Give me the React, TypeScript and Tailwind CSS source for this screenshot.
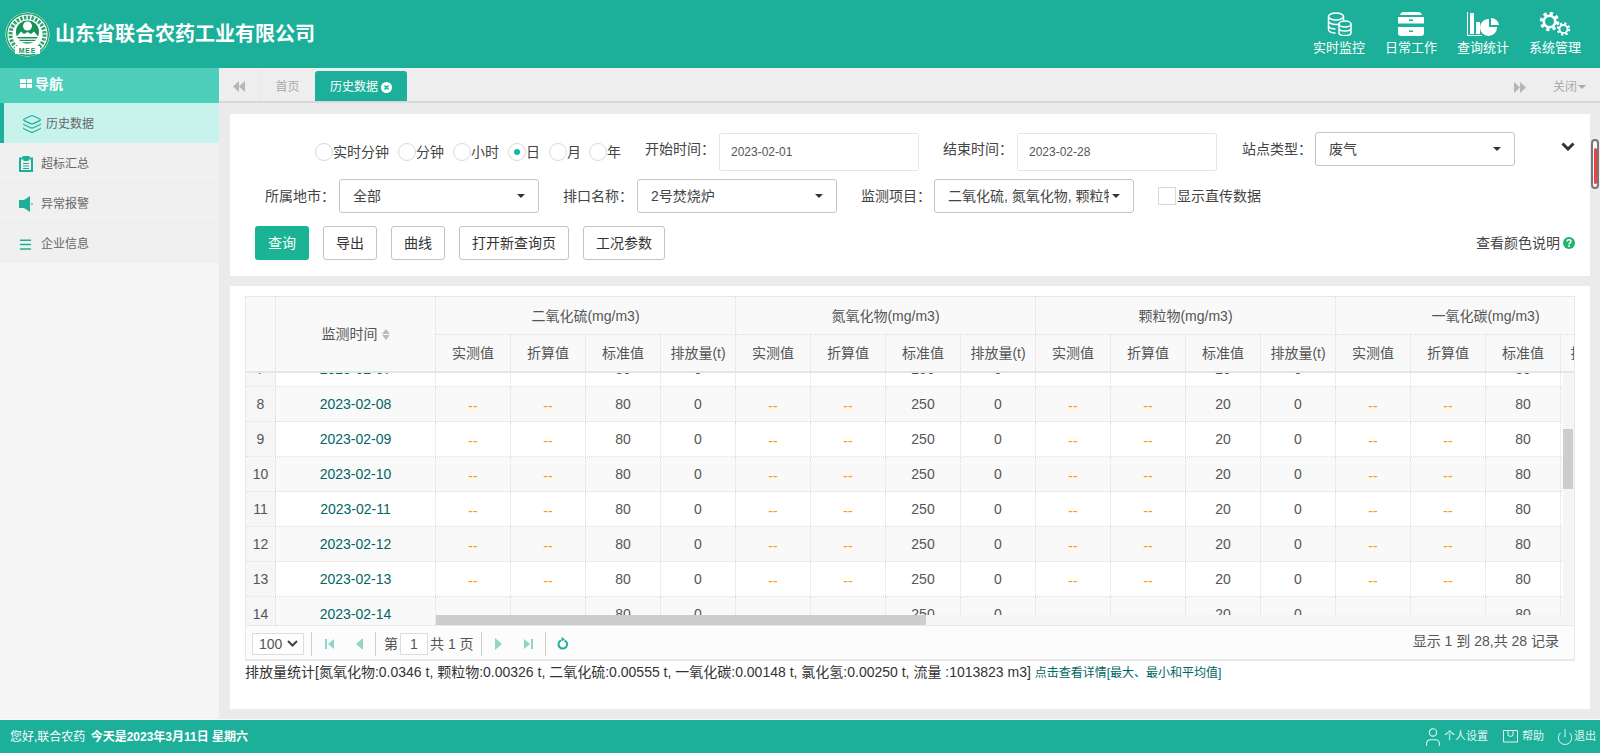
import { Layers, Menu, Power, User } from 'lucide-react';

const font = "font-['Liberation_Sans','Noto_Sans_CJK_SC',sans-serif]";

const radios = [
  { label: '实时分钟', cls: 'ml-[85px]' },
  { label: '分钟', cls: 'ml-[9px]' },
  { label: '小时', cls: 'ml-[9px]' },
  { label: '日', cls: 'ml-[9px]', checked: true },
  { label: '月', cls: 'ml-[9px]' },
  { label: '年', cls: 'ml-[8px]' },
];

const rows = [
  { no: 7, date: '2023-02-07' },
  { no: 8, date: '2023-02-08' },
  { no: 9, date: '2023-02-09' },
  { no: 10, date: '2023-02-10' },
  { no: 11, date: '2023-02-11' },
  { no: 12, date: '2023-02-12' },
  { no: 13, date: '2023-02-13' },
  { no: 14, date: '2023-02-14' },
];

const groups = [
  { title: '二氧化硫(mg/m3)', std: '80' },
  { title: '氮氧化物(mg/m3)', std: '250' },
  { title: '颗粒物(mg/m3)', std: '20' },
  { title: '一氧化碳(mg/m3)', std: '80' },
];

function Logo() {
  return (
    <svg width="45" height="45" viewBox="0 0 45 45" className="shrink-0">
      <circle cx="22.5" cy="22.5" r="22" fill="#fff" />
      <circle cx="22.5" cy="22.5" r="20.8" fill="none" stroke="#1f9e62" strokeWidth="1.4" />
      <circle cx="22.5" cy="22.5" r="17" fill="none" stroke="#2aa56d" strokeWidth="4" strokeDasharray="2.4 1.4" />
      <circle cx="22.5" cy="20" r="12.500" fill="#fff" />
      <circle cx="22.5" cy="20" r="11.500" fill="#14925a" />
      <circle cx="22.5" cy="14" r="4.500" fill="#fff" />
      <path d="M11.500 25 L16 19.500 L19 22 L22.5 20 L26 22 L29 19.500 L33.500 25 Z" fill="#fff" />
      <path d="M12 26.500h21v1.300H12zM14.500 29h16v1.200H14.500z" fill="#fff" />
      <rect x="10" y="34" width="25" height="8" fill="#fff" />
      <text x="22.5" y="40.500" textAnchor="middle" fontSize="7" fontWeight="700" fill="#14925a" letterSpacing="0.8">MEE</text>
    </svg>
  );
}

function DbIcon() {
  return (
    <svg width="25" height="24" viewBox="0 0 25 24" fill="none" stroke="#fff" strokeWidth="1.5">
      <ellipse cx="9" cy="4.5" rx="7.5" ry="3.5" />
      <path d="M1.5 4.5v13c0 2 3 3.5 7 3.5M1.5 9c0 2 3.5 3.5 7.5 3.5 1 0 2-.1 3-.3M1.5 13.500c0 2 3 3.500 7 3.500M16.500 4.500v4" />
      <ellipse cx="18" cy="12" rx="6" ry="3" />
      <path d="M12 12v9c0 1.500 2.700 2.500 6 2.500s6-1 6-2.500v-9M12 16.500c0 1.500 2.700 2.500 6 2.500s6-1 6-2.500" />
    </svg>
  );
}

function DrawerIcon() {
  return (
    <svg width="26" height="24" viewBox="0 0 26 24" fill="#fff">
      <path d="M5 0h16a4 4 0 0 1 3 3H2a4 4 0 0 1 3-3z" />
      <path d="M0 5h26v6.500H0z" />
      <path d="M0 15h26v6a3 3 0 0 1-3 3H3a3 3 0 0 1-3-3z" />
      <rect x="11" y="7.500" width="4" height="1.500" fill="#1cb09a" />
      <rect x="11" y="18.500" width="4" height="1.500" fill="#1cb09a" />
    </svg>
  );
}

function ChartIcon() {
  return (
    <svg width="33" height="24" viewBox="0 0 33 24" fill="#fff">
      <path d="M0 0h1v23h14v1H0z" />
      <rect x="3" y="1" width="4" height="21" />
      <rect x="9" y="10" width="4" height="12" />
      <path d="M23 6v8h8a8.500 8.500 0 1 1-8-8z" transform="translate(-1 1)" />
      <path d="M24 6a8 8 0 0 1 8 7h-8z" />
    </svg>
  );
}

function GearsIcon() {
  return (
    <svg width="32" height="24" viewBox="0 0 32 24" fill="none" stroke="#fff">
      <circle cx="10.500" cy="9.500" r="8" strokeWidth="3.500" strokeDasharray="3.200 3.080" />
      <circle cx="10.500" cy="9.500" r="5.800" strokeWidth="2.600" />
      <circle cx="24.500" cy="17" r="5.500" strokeWidth="2.500" strokeDasharray="2.200 2.120" />
      <circle cx="24.500" cy="17" r="4" strokeWidth="1.800" />
    </svg>
  );
}

function TopMenu({ label, children }: { label: string; children: React.ReactNode }) {
  return (
    <div className="flex w-[52px] flex-col items-center">
      <div className="flex h-[24px] items-center justify-center">{children}</div>
      <div className="mt-[3px] whitespace-nowrap text-[13px] leading-[18px] text-white">{label}</div>
    </div>
  );
}

function DoubleArrow({ left }: { left?: boolean }) {
  return (
    <svg width="12" height="11" viewBox="0 0 12 11" fill="#b5b5b5">
      {left ? <path d="M6 0v11L0 5.500zM12 0v11L6 5.500z" /> : <path d="M0 0v11l6-5.500zM6 0v11l6-5.500z" />}
    </svg>
  );
}

function Caret() {
  return <span className="h-0 w-0 shrink-0 border-x-[4px] border-t-[4px] border-x-transparent border-t-[#333]" />;
}

function SelectBox({ text, clip }: { text: string; clip?: boolean }) {
  return (
    <div className="flex h-[34px] w-[200px] shrink-0 items-center justify-between rounded-[3px] border border-[#c4c4c4] bg-white pl-[13px] pr-[13px] text-sm text-[#444]">
      <span className={clip ? 'w-[161px] overflow-hidden whitespace-nowrap' : 'whitespace-nowrap'}>{text}</span>
      <Caret />
    </div>
  );
}

function Btn({ text, primary, cls }: { text: string; primary?: boolean; cls: string }) {
  return (
    <button
      className={
        primary
          ? `h-[34px] rounded-[3px] bg-[#1ab394] text-sm text-white ${cls}`
          : `h-[34px] rounded-[3px] border border-[#c4c4c4] bg-white text-sm text-[#333] ${cls}`
      }
    >
      {text}
    </button>
  );
}

function PagerIcon({ d }: { d: string }) {
  return (
    <svg width="10" height="12" viewBox="0 0 10 12" fill="#8fd6c9">
      <path d={d} />
    </svg>
  );
}

function BodyCell({ children, orange }: { children?: React.ReactNode; orange?: boolean }) {
  return (
    <div
      className={
        orange
          ? 'flex w-[75px] shrink-0 items-center justify-center border-r border-dotted border-[#ddd] pt-[3px] text-[#f90]'
          : 'flex w-[75px] shrink-0 items-center justify-center border-r border-dotted border-[#ddd]'
      }
    >
      {children}
    </div>
  );
}

export default function App() {
  return (
    <div className={`flex h-[753px] w-[1600px] flex-col overflow-hidden bg-[#ebebed] ${font}`}>
      {/* top bar */}
      <header className="flex h-[68px] shrink-0 items-center justify-between bg-[#1cb09a] pl-[5px] pr-[19px]">
        <div className="flex items-center gap-[5px]">
          <Logo />
          <h1 className="text-[20px] font-bold text-white">山东省联合农药工业有限公司</h1>
        </div>
        <div className="flex gap-[20px] pt-[1px]">
          <TopMenu label="实时监控"><DbIcon /></TopMenu>
          <TopMenu label="日常工作"><DrawerIcon /></TopMenu>
          <TopMenu label="查询统计"><ChartIcon /></TopMenu>
          <TopMenu label="系统管理"><GearsIcon /></TopMenu>
        </div>
      </header>

      <div className="flex h-[651px] shrink-0">
        {/* side nav */}
        <aside className="w-[219px] shrink-0 bg-[#f5f5f5]">
          <div className="flex h-[35px] items-center gap-[3px] bg-[#4dcfbb] pb-[4px] pl-[20px] text-sm font-bold text-white">
            <span className="grid grid-cols-2 gap-[1px]">
              <i className="h-[4px] w-[5.500px] bg-white" />
              <i className="h-[4px] w-[5.500px] bg-white" />
              <i className="h-[4px] w-[5.500px] bg-white" />
              <i className="h-[4px] w-[5.500px] bg-white" />
            </span>
            导航
          </div>
          <div className="flex h-[40px] items-center gap-[4px] border-l-4 border-[#1cb09a] bg-[#c8f3ec] pl-[18px] pt-[2px] text-xs text-[#666]">
            <Layers size={20} strokeWidth={1.4} className="text-[#1cb09a]" />
            历史数据
          </div>
          <div className="flex h-[40px] items-center gap-[8px] border-b border-[#ebebeb] bg-[#f0f0f0] pl-[19px] pt-[2px] text-xs text-[#666]">
            <svg width="14" height="16" viewBox="0 0 14 16" fill="#1cb09a">
              <path d="M0 1.500h3.500V0h7v1.500H14V16H0zM2 3.500V14h10V3.500H9.500V5h-5V3.500zM4 7h6v1H4zM4 9.500h6v1H4zM4 12h6v1H4z" fillRule="evenodd" />
            </svg>
            超标汇总
          </div>
          <div className="flex h-[40px] items-center gap-[8px] border-b border-[#ebebeb] bg-[#f0f0f0] pl-[19px] pt-[2px] text-xs text-[#666]">
            <svg width="14" height="16" viewBox="0 0 14 16" fill="#1cb09a">
              <path d="M0 4h5l6-4v16l-6-4H0zM12.500 6.500l1.500 1.500-1.500 1.500z" />
            </svg>
            异常报警
          </div>
          <div className="flex h-[40px] items-center gap-[8px] bg-[#f0f0f0] pl-[18px] pt-[2px] text-xs text-[#666]">
            <Menu size={15} strokeWidth={2.4} className="text-[#1cb09a]" />
            企业信息
          </div>
        </aside>

        {/* main */}
        <main className="relative flex min-w-0 flex-1 flex-col">
          <div className="flex h-[35px] shrink-0 items-end justify-between border-b-[2px] border-[#d9d9d9] bg-[#eeeeee]">
            <div className="flex h-[30px] items-center">
              <div className="flex h-full w-[41px] items-center justify-center border-r border-[#e6e6e6]">
                <DoubleArrow left />
              </div>
              <div className="flex h-full w-[55px] items-center justify-center pt-[2px] text-xs text-[#aaa]">首页</div>
              <div className="flex h-full w-[92px] items-center justify-center gap-[3px] rounded-t-[3px] bg-[#1cb09a] pt-[2px] text-xs text-white">
                历史数据
                <svg width="11" height="11" viewBox="0 0 11 11">
                  <circle cx="5.500" cy="5.500" r="5.500" fill="#fff" />
                  <path d="M3.500 3.500l4 4M7.500 3.500l-4 4" stroke="#1cb09a" strokeWidth="1.600" />
                </svg>
              </div>
            </div>
            <div className="flex h-[30px] items-center pr-[14px] pt-[2px]">
              <DoubleArrow />
              <span className="ml-[27px] text-xs text-[#aaa]">关闭</span>
              <span className="ml-[1px] h-0 w-0 border-x-[4px] border-t-[4px] border-x-transparent border-t-[#aaa]" />
            </div>
          </div>

          <div className="flex flex-col gap-[10px] pl-[11px] pr-[10px] pt-[11px]">
            {/* filter panel */}
            <section className="flex h-[162px] flex-col bg-white pt-[19px] text-sm text-[#444]">
              <div className="flex h-[38px] items-center">
                {radios.map((r) => (
                  <label key={r.label} className={`flex items-center ${r.cls}`}>
                    <span className="flex h-[18px] w-[18px] items-center justify-center rounded-full border border-[#d9d9d9]">
                      {r.checked && <span className="h-[6px] w-[6px] rounded-full bg-[#12b5b0]" />}
                    </span>
                    {r.label}
                  </label>
                ))}
                <span className="-mt-[6px] ml-[24px] w-[74px] whitespace-nowrap">开始时间：</span>
                <input readOnly value="2023-02-01" className="h-[38px] w-[200px] rounded-[2px] border border-[#e5e5e6] pl-[11px] text-xs text-[#555]" />
                <span className="-mt-[6px] ml-[24px] w-[74px] whitespace-nowrap">结束时间：</span>
                <input readOnly value="2023-02-28" className="h-[38px] w-[200px] rounded-[2px] border border-[#e5e5e6] pl-[11px] text-xs text-[#555]" />
                <span className="-mt-[6px] ml-[25px] w-[73px] whitespace-nowrap">站点类型：</span>
                <div className="-mt-[1px] self-start">
                  <SelectBox text="废气" />
                </div>
                <svg width="14" height="9" viewBox="0 0 14 9" fill="none" stroke="#333" strokeWidth="3" className="-mt-[12px] ml-[46px]">
                  <path d="M1.500 1.500L7 7l5.500-5.500" />
                </svg>
              </div>
              <div className="mt-[8px] flex h-[34px] items-center">
                <span className="ml-[35px] w-[74px] whitespace-nowrap">所属地市：</span>
                <SelectBox text="全部" />
                <span className="ml-[24px] w-[74px] whitespace-nowrap">排口名称：</span>
                <SelectBox text="2号焚烧炉" />
                <span className="ml-[24px] w-[73px] whitespace-nowrap">监测项目：</span>
                <SelectBox text="二氧化硫, 氮氧化物, 颗粒物, 一氧化碳" clip />
                <span className="ml-[24px] h-[18px] w-[18px] border border-[#d9d9d9]" />
                <span className="ml-[1px]">显示直传数据</span>
              </div>
              <div className="mt-[13px] flex h-[34px] items-center pl-[25px] pr-[15px]">
                <div className="flex gap-[14px]">
                  <Btn primary text="查询" cls="w-[54px]" />
                  <Btn text="导出" cls="w-[54px]" />
                  <Btn text="曲线" cls="w-[54px]" />
                  <Btn text="打开新查询页" cls="w-[110px]" />
                  <Btn text="工况参数" cls="w-[82px]" />
                </div>
                <div className="ml-auto flex items-center gap-[3px]">
                  查看颜色说明
                  <svg width="12" height="12" viewBox="0 0 12 12">
                    <circle cx="6" cy="6" r="6" fill="#1fb56f" />
                    <path d="M4 4.600c0-2.600 4-2.600 4 0 0 1.500-2 1.300-2 2.900" stroke="#fff" strokeWidth="1.500" fill="none" />
                    <rect x="5.200" y="8.400" width="1.600" height="1.600" fill="#fff" />
                  </svg>
                </div>
              </div>
            </section>

            {/* data panel */}
            <section className="h-[423px] bg-white px-[15px] pt-[10px] text-sm text-[#555]">
              <div className="border-x border-t border-[#e8e8e8]">
                {/* table head */}
                <div className="flex h-[76px] overflow-hidden border-b-[2px] border-[#e5e5e5] bg-[#f9f9f9]">
                  <div className="w-[30px] shrink-0 border-r border-dotted border-[#ddd]" />
                  <div className="flex w-[160px] shrink-0 items-center justify-center gap-[4px] border-r border-dotted border-[#ddd]">
                    监测时间
                    <span className="flex flex-col gap-[1px]">
                      <i className="h-0 w-0 border-x-[4.500px] border-b-[5px] border-x-transparent border-b-[#bbb]" />
                      <i className="h-0 w-0 border-x-[4.500px] border-t-[5px] border-x-transparent border-t-[#bbb]" />
                    </span>
                  </div>
                  {groups.map((g) => (
                    <div key={g.title} className="w-[300px] shrink-0">
                      <div className="flex h-[38px] items-center justify-center border-b border-r border-dotted border-[#ddd]">{g.title}</div>
                      <div className="flex h-[36px]">
                        <BodyCell>实测值</BodyCell>
                        <BodyCell>折算值</BodyCell>
                        <BodyCell>标准值</BodyCell>
                        <BodyCell>排放量(t)</BodyCell>
                      </div>
                    </div>
                  ))}
                </div>
                {/* table body */}
                <div className="relative h-[252px] overflow-hidden">
                  <div className="-mt-[21px]">
                    {rows.map((r) => (
                      <div key={r.no} className={r.no % 2 === 0 ? 'flex h-[35px] border-b border-dotted border-[#ddd] bg-[#f9f9f9]' : 'flex h-[35px] border-b border-dotted border-[#ddd] bg-white'}>
                        <div className="flex w-[30px] shrink-0 items-center justify-center border-r border-dotted border-[#ddd] bg-[#f6f6f6]">{r.no}</div>
                        <div className="flex w-[160px] shrink-0 items-center justify-center border-r border-dotted border-[#ddd] text-[#066]">{r.date}</div>
                        {groups.map((g) => (
                          <div key={g.title} className="flex w-[300px] shrink-0">
                            <BodyCell orange>--</BodyCell>
                            <BodyCell orange>--</BodyCell>
                            <BodyCell>{g.std}</BodyCell>
                            <BodyCell>0</BodyCell>
                          </div>
                        ))}
                      </div>
                    ))}
                  </div>
                  {/* table scrollbars */}
                  <div className="absolute bottom-0 left-[190px] right-0 h-[10px] bg-[#f5f5f5]">
                    <div className="h-full w-[490px] bg-[#cdcdce]" />
                  </div>
                  <div className="absolute right-0 top-0 h-full w-[11px] bg-[#f5f5f5] pr-[1px] pt-[56px]">
                    <div className="h-[60px] w-[10px] bg-[#cdcdce]" />
                  </div>
                </div>
                {/* pager */}
                <div className="flex h-[36px] items-center justify-between rounded-t-[3px] border-y border-b-[2px] border-[#e8e8e8] bg-[#fcfcfc] pl-[6px] pr-[15px]">
                  <div className="flex items-center pt-[2px]">
                    <div className="flex h-[22px] w-[52px] items-center justify-between border border-[#ddd] bg-white pl-[6px] pr-[5px]">
                      100
                      <svg width="11" height="7" viewBox="0 0 11 7" fill="none" stroke="#444" strokeWidth="2">
                        <path d="M1 1l4.500 4.500L10 1" />
                      </svg>
                    </div>
                    <span className="ml-[7px] h-[24px] w-px bg-[#ccc]" />
                    <span className="ml-[13px] flex w-[10px]"><PagerIcon d="M0 1h2v10H0zM9 1v10L3 6z" /></span>
                    <span className="ml-[20px] flex w-[10px]"><PagerIcon d="M8 0v12L1 6z" /></span>
                    <span className="ml-[10px] h-[24px] w-px bg-[#ccc]" />
                    <span className="ml-[8px]">第</span>
                    <input readOnly value="1" className="ml-[2px] h-[22px] w-[28px] border border-[#ddd] bg-white text-center text-[#555]" />
                    <span className="ml-[2px] whitespace-nowrap">共 1 页</span>
                    <span className="ml-[7px] h-[24px] w-px bg-[#ccc]" />
                    <span className="ml-[12px] flex w-[10px]"><PagerIcon d="M1 0v12l7-6z" /></span>
                    <span className="ml-[20px] flex w-[10px]"><PagerIcon d="M0 1v10l6-5zM7 1h2v10H7z" /></span>
                    <span className="ml-[11px] h-[24px] w-px bg-[#ccc]" />
                    <svg width="12" height="13" viewBox="0 0 12 13" fill="none" className="ml-[11px]">
                      <path d="M7.500 3.300a4.300 4.300 0 1 1-3.600.1" stroke="#1cb09a" strokeWidth="2" />
                      <path d="M4.500 0l3.500 2.300L4.500 4.600z" fill="#1cb09a" />
                    </svg>
                  </div>
                  <span className="-mt-[4px] text-sm">显示 1 到 28,共 28 记录</span>
                </div>
              </div>
              <p className="mt-[1px] whitespace-nowrap text-sm leading-[20px] text-[#333]">
                排放量统计[氮氧化物:0.0346 t, 颗粒物:0.00326 t, 二氧化硫:0.00555 t, 一氧化碳:0.00148 t, 氯化氢:0.00250 t, 流量 :1013823 m3]{' '}
                <a className="text-xs text-[#066]">点击查看详情[最大、最小和平均值]</a>
              </p>
            </section>
          </div>

          {/* page scrollbar */}
          <div className="absolute right-[1px] top-[71px] flex h-[50px] w-[8px] justify-center rounded-full border-[2px] border-[#777] bg-white pt-[7px]">
            <div className="h-[36px] w-[3px] rounded-full bg-[#f04040]" />
          </div>
        </main>
      </div>

      {/* footer */}
      <footer className="mt-auto flex h-[34px] shrink-0 items-center justify-between border-t border-white bg-[#1cb09a] pl-[10px] pr-[4px] text-xs text-white">
        <div>
          您好,联合农药 <b className="ml-[2px]">今天是2023年3月11日 星期六</b>
        </div>
        <div className="flex items-center text-[11px] text-[#e2f6f2]">
          <User size={22} strokeWidth={1.2} />
          <span>个人设置</span>
          <svg width="15" height="13" viewBox="0 0 15 13" fill="none" stroke="currentColor" className="ml-[15px]">
            <path d="M.5.5h14v11.500H.5zM5 .5v5l2.500 1 2.500-1v-5" />
          </svg>
          <span className="ml-[4px]">帮助</span>
          <Power size={18} strokeWidth={1.3} className="ml-[12px]" />
          <span>退出</span>
        </div>
      </footer>
    </div>
  );
}
